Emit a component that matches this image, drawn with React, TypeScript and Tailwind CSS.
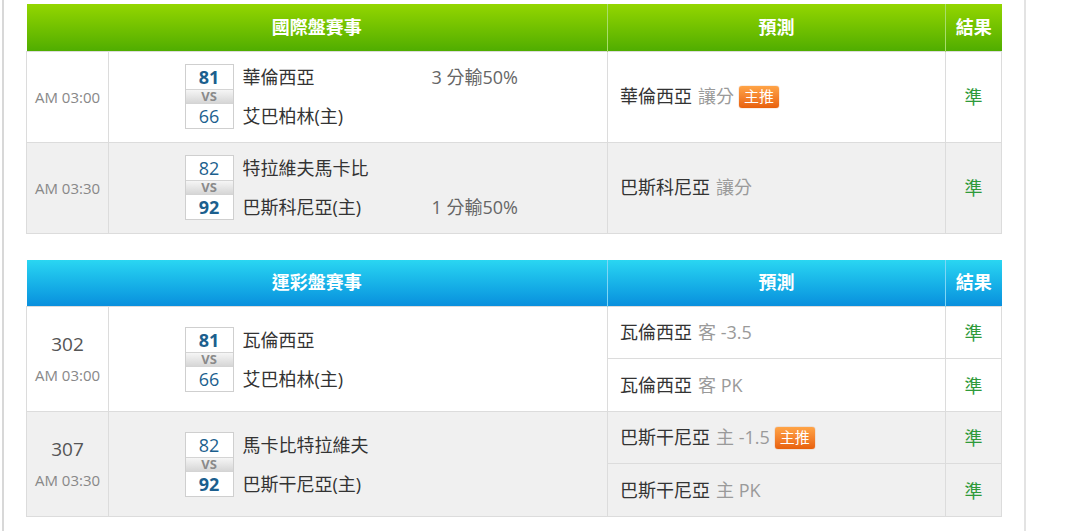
import React from 'react';

type Match = {
    home: string;
    away: string;
    homeScore: number;
    awayScore: number;
    line?: string;
    lineOnHome?: boolean;
};

const font = { fontFamily: '"Open Sans", "Noto Sans CJK TC", sans-serif' };

const Badge = () => (
    <span className="ml-[5px] inline-flex h-[22px] items-center rounded-[3px] bg-gradient-to-b from-[#ffa446] to-[#e8600a] px-[5px] text-[15px] leading-none text-white shadow-[0_0_1px_#c85000]">
        主推
    </span>
);

const ScoreBox = ({ a, b }: { a: number; b: number }) => (
    <div className="flex w-[49px] flex-col border border-[#cfcfcf] bg-white text-center">
        <div className={`h-[24px] text-[18px] leading-[24px] text-[#1c5f8e] ${a > b ? 'font-bold' : ''}`}>{a}</div>
        <div className="h-[15px] border-y border-[#d4d4d4] bg-gradient-to-b from-[#f6f6f6] to-[#d6d6d6] text-[13px] font-bold leading-[13px] text-[#8a8a8a]">
            VS
        </div>
        <div className={`h-[24px] text-[18px] leading-[24px] text-[#1c5f8e] ${b > a ? 'font-bold' : ''}`}>{b}</div>
    </div>
);

const MatchCell = ({ m }: { m: Match }) => (
    <div className="mx-auto flex w-[347px] items-center">
        <ScoreBox a={m.awayScore} b={m.homeScore} />
        <div className="ml-[9px] flex w-[189px] flex-col gap-[15px] text-[18px] leading-[24px] text-[#333]">
            <span>{m.away}</span>
            <span>{m.home}</span>
        </div>
        <div className="flex flex-col gap-[15px] text-[18px] leading-[24px] text-[#666]">
            <span>{m.line && !m.lineOnHome ? m.line : '\u00a0'}</span>
            <span>{m.line && m.lineOnHome ? m.line : '\u00a0'}</span>
        </div>
    </div>
);

const Pick = ({ team, tip, hot }: { team: string; tip: string; hot?: boolean }) => (
    <div className="flex items-center pl-[12px] text-[18px]">
        <span className="text-[#333]">{team}</span>
        <span className="ml-[6px] text-[#9a9a9a]">{tip}</span>
        {hot && <Badge />}
    </div>
);

const Result = () => <span className="relative top-[1px] text-[18px] text-[#2f9a3a]">準</span>;

const Header = ({ title, blue }: { title: string; blue?: boolean }) => {
    const bg = blue
        ? 'bg-gradient-to-b from-[#2ad6f2] to-[#0a8edc]'
        : 'bg-gradient-to-b from-[#93d600] to-[#4fad00]';
    const line = blue ? 'border-[#7fd6f5]' : 'border-[#a8dd6a]';
    return (
        <tr className={`h-[47px] ${bg}`}>
            <th colSpan={2} className={`border-r ${line} text-[18px] font-bold text-white`}>{title}</th>
            <th className={`border-r ${line} text-[18px] font-bold text-white`}>預測</th>
            <th className="text-[18px] font-bold text-white">結果</th>
        </tr>
    );
};

const Cols = () => (
    <colgroup>
        <col className="w-[82px]" />
        <col className="w-[499px]" />
        <col className="w-[338px]" />
        <col className="w-[56px]" />
    </colgroup>
);

export default function App() {
    const intl: { time: string; m: Match; pick: string; tip: string; hot?: boolean }[] = [
        {
            time: 'AM 03:00',
            m: { away: '華倫西亞', home: '艾巴柏林(主)', awayScore: 81, homeScore: 66, line: '3 分輸50%' },
            pick: '華倫西亞',
            tip: '讓分',
            hot: true,
        },
        {
            time: 'AM 03:30',
            m: { away: '特拉維夫馬卡比', home: '巴斯科尼亞(主)', awayScore: 82, homeScore: 92, line: '1 分輸50%', lineOnHome: true },
            pick: '巴斯科尼亞',
            tip: '讓分',
        },
    ];

    const sport = [
        {
            no: '302',
            time: 'AM 03:00',
            m: { away: '瓦倫西亞', home: '艾巴柏林(主)', awayScore: 81, homeScore: 66 },
            picks: [
                { team: '瓦倫西亞', tip: '客 -3.5' },
                { team: '瓦倫西亞', tip: '客 PK' },
            ],
        },
        {
            no: '307',
            time: 'AM 03:30',
            m: { away: '馬卡比特拉維夫', home: '巴斯干尼亞(主)', awayScore: 82, homeScore: 92 },
            picks: [
                { team: '巴斯干尼亞', tip: '主 -1.5', hot: true },
                { team: '巴斯干尼亞', tip: '主 PK' },
            ],
        },
    ];

    return (
        <div className="h-[531px] w-[1080px] overflow-hidden bg-white" style={font}>
            <div className="ml-[2px] h-full w-[1024px] border-l-2 border-r-2 border-l-[#d8d8d8] border-r-[#e3e3e3] pl-[22px] pt-[4px]">
                <table className="w-[975px] table-fixed border-collapse">
                    <Cols />
                    <thead>
                        <Header title="國際盤賽事" />
                    </thead>
                    <tbody>
                        {intl.map((r, i) => (
                            <tr key={i} className={`h-[91px] ${i % 2 ? 'bg-[#f0f0f0]' : 'bg-white'}`}>
                                <td className="border border-[#dcdcdc] pt-[2px] text-center text-[15px] text-[#888]">{r.time}</td>
                                <td className="border border-[#dcdcdc]">
                                    <MatchCell m={r.m} />
                                </td>
                                <td className="border border-[#dcdcdc]">
                                    <Pick team={r.pick} tip={r.tip} hot={r.hot} />
                                </td>
                                <td className="border border-[#dcdcdc] text-center">
                                    <Result />
                                </td>
                            </tr>
                        ))}
                    </tbody>
                </table>

                <table className="mt-[26px] w-[975px] table-fixed border-collapse">
                    <Cols />
                    <thead>
                        <Header title="運彩盤賽事" blue />
                    </thead>
                    <tbody>
                        {sport.map((r, i) =>
                            r.picks.map((p, j) => (
                                <tr key={`${i}-${j}`} className={`${j ? 'h-[53px]' : 'h-[52px]'} ${i % 2 ? 'bg-[#f0f0f0]' : 'bg-white'}`}>
                                    {j === 0 && (
                                        <td rowSpan={2} className="border border-[#dcdcdc] text-center">
                                            <div className="text-[19px] leading-[22px] text-[#555]">{r.no}</div>
                                            <div className="mt-[10px] text-[15px] leading-[20px] text-[#888]">{r.time}</div>
                                        </td>
                                    )}
                                    {j === 0 && (
                                        <td rowSpan={2} className="border border-[#dcdcdc]">
                                            <MatchCell m={r.m} />
                                        </td>
                                    )}
                                    <td className="border border-[#dcdcdc]">
                                        <Pick team={p.team} tip={p.tip} hot={p.hot} />
                                    </td>
                                    <td className="border border-[#dcdcdc] text-center">
                                        <Result />
                                    </td>
                                </tr>
                            ))
                        )}
                    </tbody>
                </table>
            </div>
        </div>
    );
}
